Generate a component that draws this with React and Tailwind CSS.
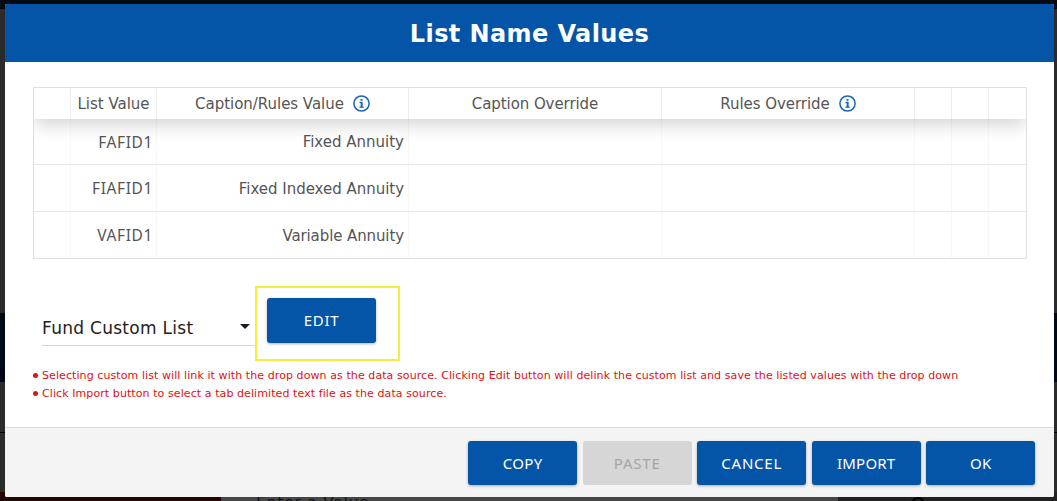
const columns = [
  { label: "", info: false },
  { label: "List Value", info: false, spacing: "tracking-[0px]" },
  { label: "Caption/Rules Value", info: true, spacing: "tracking-[-0.03px]" },
  { label: "Caption Override", info: false, spacing: "tracking-[-0.08px]" },
  { label: "Rules Override", info: true, spacing: "tracking-[-0.04px]" },
  { label: "", info: false },
  { label: "", info: false },
  { label: "", info: false },
];

const rows = [
  { value: "FAFID1", caption: "Fixed Annuity", height: "h-[46px]", spacing: "tracking-[0px]" },
  { value: "FIAFID1", caption: "Fixed Indexed Annuity", height: "h-[47px]", spacing: "tracking-[-0.02px]" },
  { value: "VAFID1", caption: "Variable Annuity", height: "h-[46px]", spacing: "tracking-[-0.1px]" },
];

const grid = "grid grid-cols-[37px_86px_252px_253px_253px_37px_37px_1fr]";

function InfoIcon() {
  return (
    <svg className="-ml-px h-[17px] w-[17px] shrink-0" viewBox="0 0 17 17" fill="none">
      <circle cx="8.5" cy="8.5" r="7.6" stroke="#1c66b4" strokeWidth="1.5" />
      <path d="M7.5 4H9.5V5.7H7.5Z" fill="#1c66b4" />
      <path d="M6.6 7.5H8.6V12M6.4 12.2H10.8" stroke="#1c66b4" strokeWidth="1.3" />
      <path d="M8.6 7V12.5" stroke="#1c66b4" strokeWidth="1.8" />
    </svg>
  );
}

function Button({ children, disabled, height = "h-[44px]" }) {
  return (
    <button
      disabled={disabled}
      className={
        "w-[109px] rounded-[3px] font-['Noto_Sans',sans-serif] text-[15px] " + height + " " +
        (disabled
          ? "bg-[#d6d6d6] text-[#a5a5a5]"
          : "bg-[#0455a8] text-white shadow-[0_1px_3px_rgba(0,0,0,0.3)]")
      }
    >
      {children}
    </button>
  );
}

export default function App() {
  return (
    <div className="relative h-[501px] w-[1057px] overflow-hidden bg-[#2b2b2b] px-[5px] pt-[4px] font-['DejaVu_Sans',sans-serif]">
      <div className="absolute inset-x-0 top-0 h-[9px] bg-[#020b12]" />
      <div className="absolute left-0 top-[313px] h-[69px] w-full bg-[#000716]" />
      <div className="absolute left-0 top-[432px] h-px w-full bg-black" />
      <div className="absolute left-0 top-[492px] h-[9px] w-[221px] bg-[#240500]" />
      <div className="absolute left-[221px] top-[492px] h-[9px] w-[617px] bg-[#464646]" />
      <div className="absolute left-[838px] top-[492px] h-[9px] w-[219px] bg-[#212121]" />
      <div className="absolute left-[911px] top-[497px] size-[14px] rounded-full border-2 border-black" />
      <div className="absolute left-[256px] top-[493px] text-[16px] leading-[20px] tracking-[0.5px] text-[#151515]">Enter a Value</div>

      <div className="relative flex h-[493px] w-[1049px] flex-col overflow-hidden rounded-[2px] bg-white">
        <header className="flex h-[58px] shrink-0 items-center justify-center bg-[#0455a8] pt-[2px] text-[24px] font-bold tracking-[0.4px] text-white">
          <h1>List Name Values</h1>
        </header>

        <main className="flex-1 pl-[28px] pt-[25px]">
          <div className="h-[172px] w-[994px] border border-[#e0e0e0] text-[15px] text-[#555]">
            <div className={grid + " relative h-[31px] bg-white shadow-[0_6px_18px_0px_rgba(0,0,0,0.17)] [clip-path:inset(0_0_-24px_0)]"}>
              {columns.map((c, i) => (
                <div key={i} className="flex items-center justify-center gap-[10px] border-r border-[#ececec] last:border-r-0">
                  <span className={"pt-[2px] " + c.spacing}>{c.label}</span>
                  {c.info && <InfoIcon />}
                </div>
              ))}
            </div>
            {rows.map((r) => (
              <div key={r.value} className={grid + " border-b border-[#e8e8e8] last:border-b-0 " + r.height}>
                <div className="border-r border-[#f8f8f8]" />
                <div className="flex items-center justify-end border-r border-[#f8f8f8] pr-[3px] pt-[2px] font-['Noto_Sans',sans-serif] text-[15.5px] tracking-[0.6px]">{r.value}</div>
                <div className={"flex items-center justify-end border-r border-[#f8f8f8] pr-[4px] pt-[2px] " + r.spacing}>{r.caption}</div>
                <div className="border-r border-[#f8f8f8]" />
                <div className="border-r border-[#f8f8f8]" />
                <div className="border-r border-[#f8f8f8]" />
                <div className="border-r border-[#f8f8f8]" />
                <div />
              </div>
            ))}
          </div>

          <div className="mt-[27px] flex h-[75px]">
            <div className="ml-[9px] mt-[23px] flex h-[37px] w-[213px] items-center justify-between border-b border-[#d8d8d8] pr-[5px] text-[17px] tracking-[0.28px] text-[#222]">
              <span className="pt-[3px]">Fund Custom List</span>
              <svg className="mb-px h-[5px] w-[10px]" viewBox="0 0 10 5">
                <path d="M0 0H10L5 5Z" fill="#1c1c1c" />
              </svg>
            </div>
            <div className="w-[145px] border-2 border-[#f7ec3a] pl-[10px] pt-[10px]">
              <Button height="h-[45px]"><span className="tracking-[0.7px]">EDIT</span></Button>
            </div>
          </div>

          <ul className="mt-[6px] text-[11px] leading-[18px] tracking-[0.085px] text-[#e01010]">
            <li className="flex items-center gap-[4px]">
              <span className="mb-px size-[5px] rounded-full bg-[#dc1414]" />
              <span>Selecting custom list will link it with the drop down as the data source. Clicking Edit button will delink the custom list and save the listed values with the drop down</span>
            </li>
            <li className="flex items-center gap-[4px]">
              <span className="mb-px size-[5px] rounded-full bg-[#dc1414]" />
              <span>Click Import button to select a tab delimited text file as the data source.</span>
            </li>
          </ul>
        </main>

        <footer className="flex h-[70px] shrink-0 justify-end gap-[5.5px] border-t border-[#d8d8d8] bg-[#f4f4f4] pr-[18.8px] pt-[13px]">
          <Button><span className="tracking-[0.3px]">COPY</span></Button>
          <Button disabled><span className="tracking-[0.8px]">PASTE</span></Button>
          <Button><span className="tracking-[0.8px]">CANCEL</span></Button>
          <Button><span className="tracking-[0.2px]">IMPORT</span></Button>
          <Button><span className="tracking-[0.2px]">OK</span></Button>
        </footer>
      </div>
    </div>
  );
}
